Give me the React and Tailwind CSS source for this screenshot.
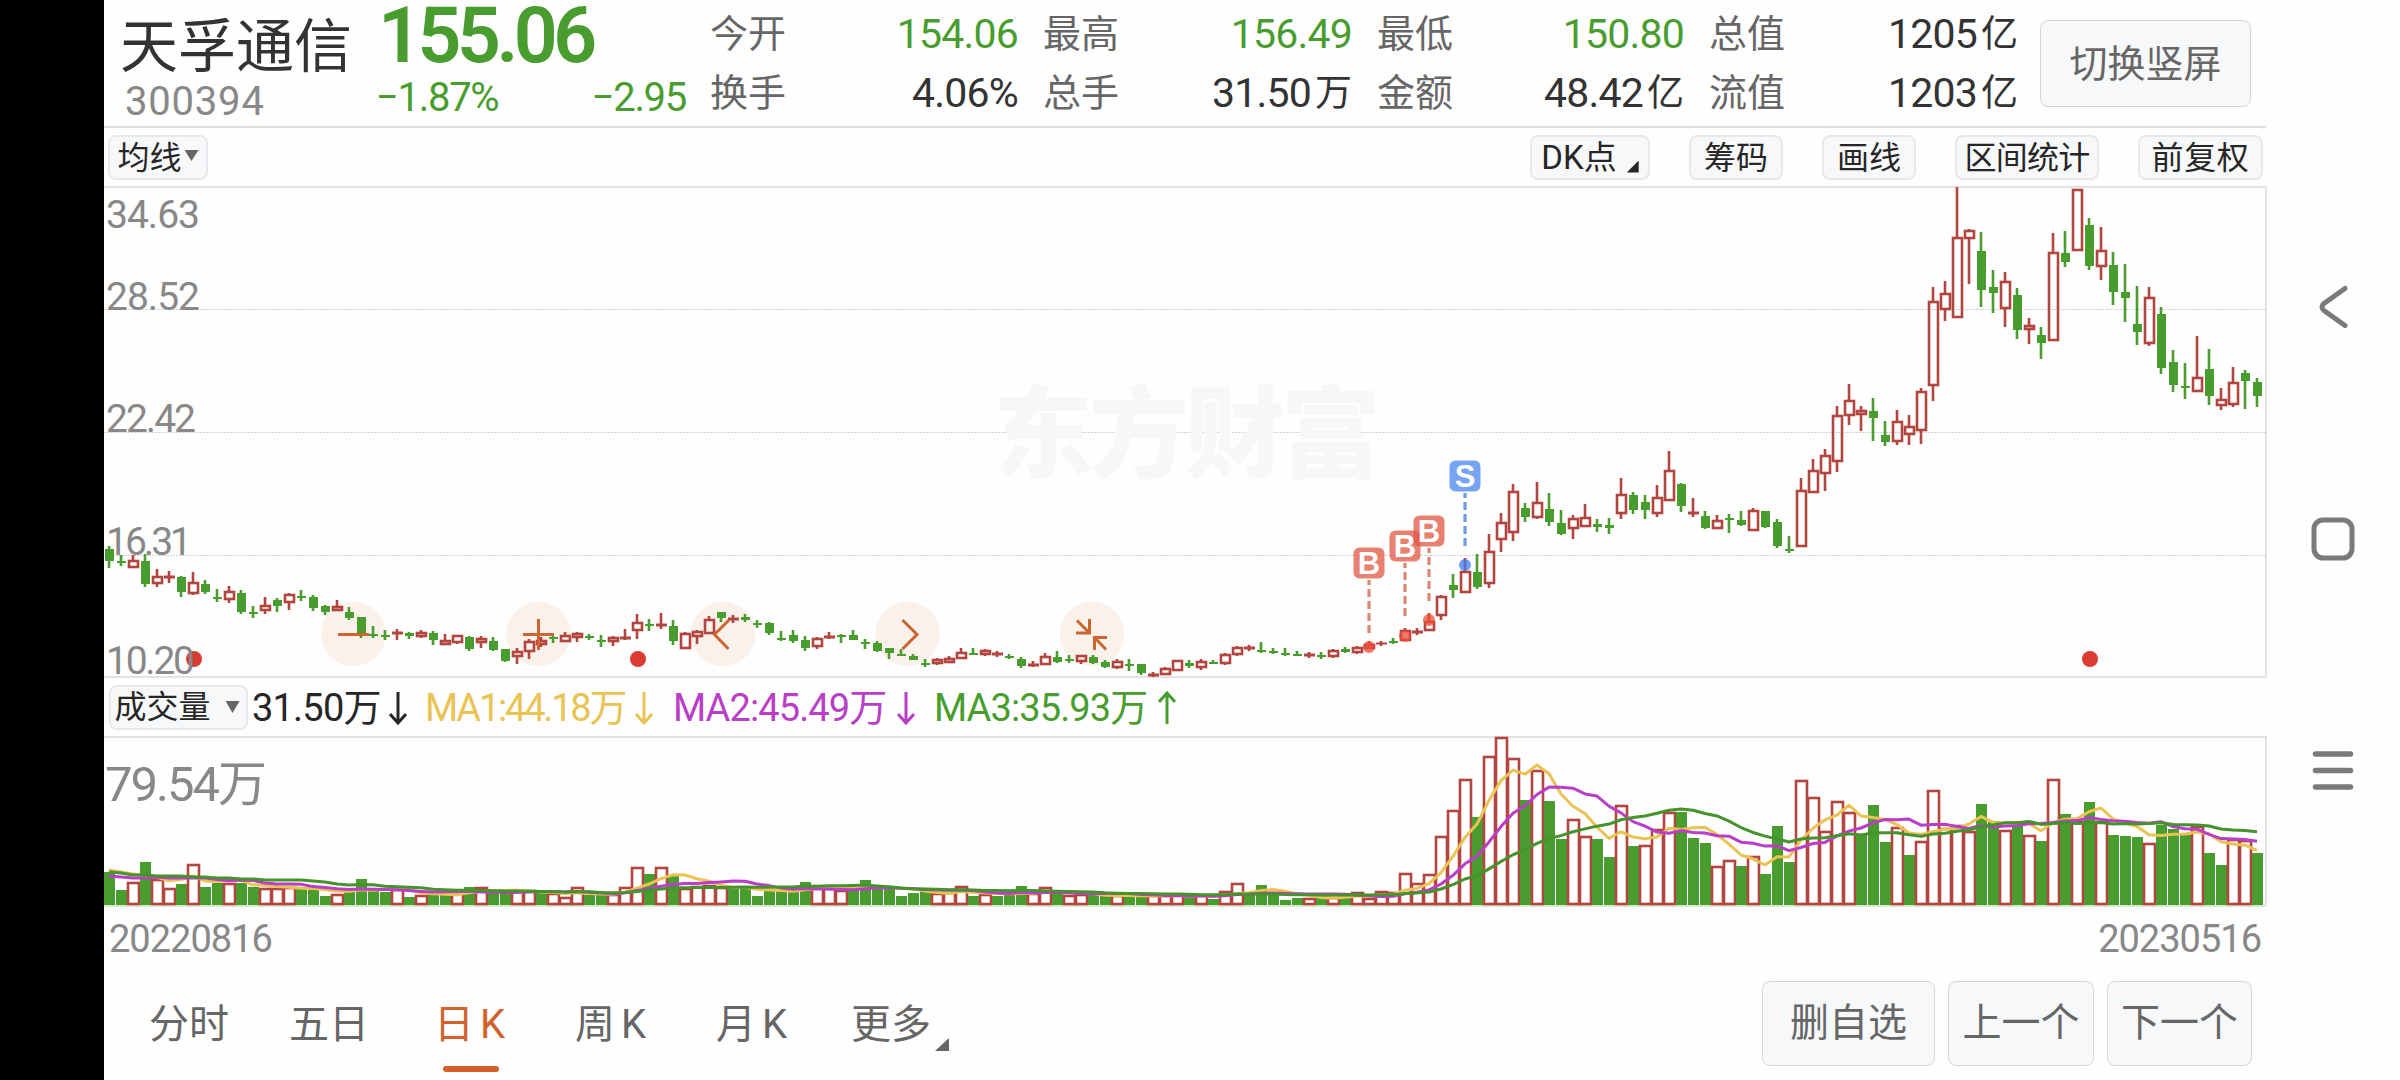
import clsx from "clsx";

const UP = "#b2453f";
const DOWN = "#489d2e";

// [direction, high, body top, body bottom, low] in chart pixels
const candles = [
  ["g", 546, 549, 561, 568], ["g", 555, 561, 562, 566], ["r", 555, 561, 567, 568], ["g", 554, 561, 584, 587],
  ["r", 569, 577, 583, 587], ["r", 571, 576, 578, 583], ["g", 576, 577, 592, 597], ["r", 572, 583, 593, 595],
  ["g", 580, 584, 592, 594], ["g", 589, 597, 598, 602], ["r", 586, 592, 599, 603], ["g", 590, 593, 612, 614],
  ["g", 606, 612, 613, 618], ["r", 597, 606, 610, 614], ["g", 598, 600, 606, 612], ["r", 593, 595, 602, 610],
  ["g", 590, 596, 598, 601], ["g", 595, 597, 608, 611], ["g", 605, 606, 612, 615], ["r", 600, 607, 610, 611],
  ["g", 607, 612, 618, 620], ["g", 617, 617, 634, 638], ["g", 626, 634, 635, 638], ["g", 630, 635, 637, 640],
  ["r", 629, 632, 634, 640], ["g", 632, 633, 636, 639], ["r", 630, 633, 636, 638], ["g", 631, 633, 640, 645],
  ["r", 634, 641, 644, 645], ["r", 635, 636, 642, 644], ["g", 636, 637, 649, 651], ["r", 636, 639, 642, 648],
  ["g", 637, 641, 650, 651], ["g", 649, 649, 661, 662], ["r", 648, 652, 656, 664], ["r", 639, 642, 651, 659],
  ["r", 637, 641, 644, 647], ["g", 636, 637, 638, 643], ["r", 632, 636, 641, 641], ["r", 632, 634, 637, 642],
  ["g", 634, 636, 637, 640], ["g", 635, 640, 641, 647], ["r", 636, 638, 641, 646], ["r", 629, 637, 639, 640],
  ["r", 614, 623, 630, 639], ["g", 619, 624, 625, 631], ["r", 613, 624, 626, 629], ["g", 620, 626, 641, 645],
  ["r", 632, 634, 648, 649], ["r", 630, 632, 636, 644], ["r", 616, 620, 633, 634], ["g", 612, 612, 618, 622],
  ["r", 615, 618, 620, 623], ["g", 614, 617, 620, 622], ["g", 620, 623, 624, 628], ["g", 622, 623, 633, 635],
  ["g", 631, 638, 639, 641], ["g", 630, 635, 641, 643], ["g", 636, 640, 648, 651], ["r", 637, 639, 646, 649],
  ["r", 632, 636, 638, 639], ["g", 634, 635, 636, 643], ["g", 630, 635, 640, 640], ["g", 639, 642, 644, 649],
  ["g", 641, 643, 651, 652], ["g", 648, 648, 653, 659], ["g", 649, 654, 655, 656], ["g", 654, 656, 660, 660],
  ["g", 659, 663, 664, 667], ["r", 658, 660, 663, 665], ["r", 656, 659, 662, 663], ["r", 648, 653, 658, 659],
  ["g", 648, 653, 654, 655], ["r", 649, 651, 654, 656], ["r", 651, 653, 655, 657], ["g", 654, 656, 657, 659],
  ["g", 657, 659, 666, 668], ["r", 661, 664, 666, 667], ["r", 653, 657, 664, 665], ["g", 651, 657, 662, 663],
  ["g", 655, 659, 660, 663], ["r", 655, 656, 661, 664], ["g", 655, 657, 663, 664], ["g", 660, 662, 667, 668],
  ["r", 659, 662, 667, 669], ["g", 659, 664, 665, 671], ["g", 664, 664, 673, 675], ["r", 672, 674, 676, 677],
  ["r", 667, 669, 674, 675], ["r", 660, 661, 670, 671], ["g", 660, 663, 666, 668], ["r", 659, 662, 667, 670],
  ["g", 660, 662, 663, 663], ["r", 653, 655, 663, 665], ["r", 646, 648, 654, 656], ["r", 645, 647, 649, 651],
  ["g", 642, 650, 651, 653], ["g", 648, 651, 652, 654], ["g", 648, 653, 654, 656], ["g", 651, 654, 655, 656],
  ["r", 652, 654, 656, 658], ["g", 652, 655, 656, 659], ["r", 649, 651, 656, 658], ["g", 647, 649, 652, 653],
  ["r", 646, 648, 652, 654], ["r", 641, 645, 648, 649], ["r", 641, 643, 644, 646], ["g", 638, 641, 642, 644],
  ["r", 628, 631, 640, 641], ["r", 628, 631, 633, 635], ["r", 613, 622, 630, 631], ["r", 595, 597, 615, 620],
  ["g", 574, 585, 590, 598], ["r", 558, 572, 592, 593], ["g", 554, 572, 587, 589], ["r", 534, 552, 583, 588],
  ["r", 513, 523, 539, 552], ["r", 484, 492, 532, 541], ["g", 503, 508, 517, 522], ["r", 482, 503, 517, 519],
  ["g", 493, 509, 522, 526], ["g", 510, 523, 534, 535], ["r", 515, 519, 528, 539], ["r", 504, 518, 526, 527],
  ["g", 519, 524, 527, 532], ["g", 518, 525, 528, 534], ["r", 478, 495, 513, 519], ["g", 492, 495, 510, 514],
  ["g", 495, 502, 510, 519], ["r", 485, 498, 513, 517], ["r", 451, 471, 500, 501], ["g", 483, 484, 506, 512],
  ["r", 498, 512, 514, 517], ["g", 511, 516, 528, 529], ["r", 515, 521, 528, 529], ["g", 514, 518, 520, 533],
  ["g", 511, 520, 525, 526], ["r", 508, 511, 530, 531], ["g", 511, 511, 527, 528], ["g", 519, 522, 546, 548],
  ["g", 536, 549, 551, 553], ["r", 478, 491, 546, 547], ["r", 459, 471, 492, 493], ["r", 449, 456, 473, 491],
  ["r", 406, 416, 461, 472], ["r", 384, 401, 415, 425], ["r", 406, 411, 414, 431], ["g", 398, 411, 418, 441],
  ["g", 421, 435, 442, 446], ["r", 410, 422, 441, 445], ["r", 415, 427, 434, 445], ["r", 388, 392, 430, 444],
  ["r", 287, 302, 385, 401], ["r", 281, 294, 309, 321], ["r", 187, 238, 317, 318], ["r", 229, 231, 238, 284],
  ["g", 232, 251, 290, 307], ["g", 270, 287, 293, 313], ["r", 272, 282, 308, 327], ["g", 288, 295, 330, 339],
  ["r", 318, 326, 329, 344], ["g", 327, 335, 343, 359], ["r", 233, 253, 340, 341], ["g", 231, 253, 262, 267],
  ["r", 189, 190, 250, 251], ["g", 218, 225, 266, 270], ["r", 227, 251, 266, 280], ["g", 252, 265, 292, 305],
  ["g", 264, 292, 298, 322], ["g", 286, 324, 332, 345], ["r", 287, 298, 343, 346], ["g", 307, 314, 368, 374],
  ["g", 350, 362, 385, 392], ["g", 363, 386, 387, 399], ["r", 336, 378, 391, 392], ["g", 349, 369, 396, 405],
  ["r", 388, 400, 405, 410], ["r", 367, 383, 404, 407], ["g", 370, 373, 381, 409], ["g", 378, 382, 396, 407],
];

// top of each volume bar
const volumes = [
  872, 890, 883, 862, 880, 889, 884, 865, 887, 883, 884, 883, 887, 889, 889, 888, 888, 888, 896, 895,
  891, 879, 890, 892, 890, 897, 896, 894, 894, 893, 887, 888, 891, 893, 892, 891, 893, 894, 898, 888,
  895, 895, 895, 888, 868, 874, 868, 876, 889, 887, 886, 888, 887, 889, 896, 890, 891, 890, 882, 889,
  889, 891, 890, 880, 887, 888, 896, 893, 891, 894, 893, 887, 896, 895, 896, 895, 886, 894, 888, 894,
  896, 895, 895, 896, 896, 896, 896, 896, 896, 895, 896, 896, 899, 892, 884, 893, 885, 894, 900, 898,
  899, 896, 898, 895, 893, 899, 892, 893, 874, 884, 875, 837, 811, 780, 817, 757, 738, 759, 800, 771,
  801, 839, 820, 837, 839, 857, 806, 846, 846, 830, 813, 812, 838, 843, 867, 861, 866, 857, 874, 826,
  862, 781, 798, 832, 802, 813, 835, 805, 842, 828, 855, 842, 791, 829, 826, 832, 804, 821, 831, 825,
  836, 841, 780, 814, 822, 802, 822, 835, 836, 837, 844, 825, 829, 835, 827, 853, 865, 840, 841, 853,
];

// one letter per bar, r is a rising day and g a falling one
const volumeSides = [
  "ggrgrrgrggrggrrrgggr",
  "ggggrgrggrgrggrrgrrr",
  "ggrrrgrgrrrrgggggggr",
  "rrgggggggrrrgrgggrrg",
  "rrggrggrrrgrgrrggggg",
  "rgrgrrrrrrrrrrgrrrgr",
  "ggrrggrgrrrgggrrgrgg",
  "grrrrrgggrgrrrrrggrg",
  "rgrgrgrgggrgggrggrrg",
].join("");

const xAt = (i) => 109 + 12 * i;

function average(period, head) {
  return volumes.map((_, i) => {
    if (i < head.length) return head[i];
    const part = volumes.slice(i - period + 1, i + 1);
    return part.reduce((a, b) => a + b, 0) / part.length;
  });
}

const averages = [
  { color: "#e9c353", values: average(5, [870, 872, 874, 876]) },
  { color: "#b83fc6", values: average(10, [876, 877, 878, 878, 877, 878, 878, 878, 878]) },
  {
    color: "#46922d",
    values: average(20, [872, 873, 875, 875, 876, 876, 876, 877, 877, 878, 878, 879, 879, 880, 880, 880, 880, 881, 882]),
  },
];

const stats = [
  { label: "今开", value: "154.06", down: true },
  { label: "最高", value: "156.49", down: true },
  { label: "最低", value: "150.80", down: true },
  { label: "总值", value: "1205", unit: "亿" },
  { label: "换手", value: "4.06%" },
  { label: "总手", value: "31.50", unit: "万" },
  { label: "金额", value: "48.42", unit: "亿" },
  { label: "流值", value: "1203", unit: "亿" },
];

const trades = [
  { type: "B", x: 1369, y: 563, dot: 647 },
  { type: "B", x: 1405, y: 546, dot: 636 },
  { type: "B", x: 1429, y: 531, dot: 620 },
  { type: "S", x: 1465, y: 476, dot: 565 },
];

function Candle({ x, data }) {
  const [side, high, top, bottom, low] = data;
  const color = side === "g" ? DOWN : UP;
  const thin = side === "r" && bottom - top <= 2;
  return (
    <g>
      <path d={`M${x} ${high}V${top}M${x} ${bottom}V${low}`} stroke={color} strokeWidth="2.6" />
      {side === "g" && <rect x={x - 4} y={top} width="9" height={Math.max(bottom - top, 2)} fill={color} />}
      {thin && <rect x={x - 5} y={top - 0.5} width="11" height={bottom - top + 1} fill={color} />}
      {side === "r" && !thin && (
        <rect x={x - 4} y={top} width="9" height={bottom - top} fill="none" stroke={color} strokeWidth="2.6" />
      )}
    </g>
  );
}

function Trade({ type, x, y, dot }) {
  const buy = type === "B";
  return (
    <g>
      <circle cx={x} cy={dot} r="6" fill={buy ? "#ee4b35" : "#3f7cf0"} opacity="0.75" />
      <path
        d={`M${x} ${y + 70}V${y + 17}`}
        stroke={buy ? "#d98673" : "#6c9be6"}
        strokeWidth="3.2"
        strokeDasharray="8 4"
      />
      <rect x={x - 15.5} y={y - 15.5} width="31" height="31" rx="6" fill={buy ? "#e05a44" : "#4c87ee"} opacity="0.76" />
      <text
        x={x}
        y={y + 11}
        textAnchor="middle"
        fill="#fff"
        className="font-['Liberation_Sans',sans-serif] text-[31px] font-bold"
      >
        {type}
      </text>
    </g>
  );
}

function PriceChart() {
  const labels = [
    ["34.63", 228, 94],
    ["28.52", 310, 94],
    ["22.42", 432, 90],
    ["16.31", 555, 86],
    ["10.20", 674, 89],
  ];
  return (
    <svg className="block shrink-0" width="2164" height="492" viewBox="104 186 2164 492">
      <path d="M104 187H2266V677H104" fill="none" stroke="#e3e3e3" strokeWidth="2" />
      {[309.5, 432.5, 555.5].map((y) => (
        <path key={y} d={`M104 ${y}H2266`} stroke="#d2d2d2" strokeWidth="1" strokeDasharray="2 1" />
      ))}
      <text
        x="993"
        y="470"
        textLength="388"
        fill="#f7f7f7"
        className="font-['Noto_Sans_CJK_SC',sans-serif] text-[100px] font-black"
      >
        东方财富
      </text>
      {[353.5, 538.5, 723, 907.5, 1092].map((x) => (
        <circle key={x} cx={x} cy="634" r="32.3" fill="#fbf1eb" />
      ))}
      {[194, 638, 2090].map((x) => (
        <circle key={x} cx={x} cy="659" r="8" fill="#dc3b32" />
      ))}
      {labels.map(([text, y, width]) => (
        <text key={text} x="106" y={y} textLength={width} fill="#888" className="text-[39px]">
          {text}
        </text>
      ))}
      {candles.map((c, i) => (
        <Candle key={i} x={xAt(i)} data={c} />
      ))}
      <g fill="none" stroke="#cc6532" strokeWidth="3">
        <path d="M338 634.5H369" />
        <path d="M523 634.5H554M538.5 619V650" />
        <path d="M729 620L714.5 634.5L728.5 649" />
        <path d="M902.5 620L917 634.5L902.5 649" />
        <path d="M1077 620.5L1089 632.5M1089.5 619V633H1076M1107 637.5H1094.5V650M1094.5 637.5L1106 649.5" />
      </g>
      {trades.map((t) => (
        <Trade key={t.x} {...t} />
      ))}
    </svg>
  );
}

function VolumeChart() {
  return (
    <svg className="block shrink-0" width="2164" height="171" viewBox="104 736 2164 171">
      <path d="M104 737H2266V906" fill="none" stroke="#e3e3e3" strokeWidth="2" />
      <path d="M104 906H2266" stroke="#d5ebcb" strokeWidth="2" />
      <text x="105" y="801" textLength="162" fill="#888" className="text-[49px]">
        79.54万
      </text>
      {volumes.map((top, i) =>
        volumeSides[i] === "g" ? (
          <rect key={i} x={xAt(i) - 5} y={top} width="11" height={905 - top} fill={DOWN} />
        ) : (
          <rect key={i} x={xAt(i) - 5} y={top} width="11" height={904 - top} fill="#fff" stroke={UP} strokeWidth="2.6" />
        )
      )}
      {averages.map(({ color, values }) => (
        <polyline
          key={color}
          points={values.map((v, i) => `${xAt(i)},${v}`).join(" ")}
          fill="none"
          stroke={color}
          strokeWidth="3"
          strokeLinejoin="round"
        />
      ))}
    </svg>
  );
}

function Arrow({ up }) {
  return (
    <svg className="shrink-0" width="18" height="34" viewBox="0 0 18 34" fill="none" stroke="currentColor" strokeWidth="3">
      <path d={up ? "M9 33V2M1 11L9 2L17 11" : "M9 1V32M1 23L9 32L17 23"} />
    </svg>
  );
}

function Chip({ className, children }) {
  return (
    <button
      className={clsx(
        "flex h-[45px] shrink-0 items-center justify-center rounded-lg border-2 border-[#e6e8eb] bg-[#f7f8fa] text-[32px] leading-none whitespace-nowrap text-[#262626]",
        className
      )}
    >
      {children}
    </button>
  );
}

function BigButton({ className, children }) {
  return (
    <button
      className={clsx(
        "flex shrink-0 items-center justify-center rounded-lg border border-[#d4d6da] bg-[#f7f8fa] leading-none whitespace-nowrap text-[#666]",
        className
      )}
    >
      {children}
    </button>
  );
}

function Header() {
  return (
    <header className="flex h-32 border-b-2 border-[#dedede]">
      <div className="w-[274px] shrink-0 pt-[18px] pl-[16px]">
        <h1 className="text-[58px] leading-[58px] whitespace-nowrap text-[#333]">天孚通信</h1>
        <div className="mt-[6px] pl-[5px] text-[40px] leading-[40px] tracking-[0.8px] text-[#888]">300394</div>
      </div>
      <div className="w-[308px] shrink-0 text-[#489d2e]">
        <div className="h-[78px] text-[77px] leading-[73px] font-semibold tracking-[-4.5px]">155.06</div>
        <div className="flex h-10 justify-between text-[40px] leading-[40px] tracking-[-1.3px]">
          <span className="-ml-0.5">−1.87%</span>
          <span>−2.95</span>
        </div>
      </div>
      <div className="ml-[24px] grid h-[118px] shrink-0 grid-cols-[308px_309px_307px_309px] grid-rows-[58px_60px] gap-x-[25px] pt-[5px]">
        {stats.map(({ label, value, unit, down }) => (
          <div key={label} className="flex items-center justify-between leading-none whitespace-nowrap">
            <span className="text-[38px] text-[#666]">{label}</span>
            <span className={clsx("flex items-center text-[41px] tracking-[-0.8px]", down ? "text-[#489d2e]" : "text-[#333]")}>
              {value}
              {unit && <span className="ml-1 text-[37px] tracking-normal">{unit}</span>}
            </span>
          </div>
        ))}
      </div>
      <BigButton className="mt-5 ml-[22px] h-[87px] w-[211px] text-[38px]">切换竖屏</BigButton>
    </header>
  );
}

function Toolbar() {
  return (
    <div className="flex h-[58px] items-start pt-[7px] pr-[3px] pl-1">
      <Chip className="w-[100px] gap-[3px]">
        均线
        <span className="mb-1 h-[11px] w-[14px] bg-[#666] [clip-path:polygon(0_0,100%_0,50%_100%)]" />
      </Chip>
      <Chip className="ml-auto w-[120px] gap-[10px]">
        <span className="text-[33px]">DK点</span>
        <span className="mt-[18px] h-[12px] w-[12px] bg-[#262626] [clip-path:polygon(100%_0,100%_100%,0_100%)]" />
      </Chip>
      <Chip className="ml-[39px] w-[94px]">筹码</Chip>
      <Chip className="ml-[39px] w-[94px]">画线</Chip>
      <Chip className="ml-[39px] w-[144px] tracking-[-0.7px]">区间统计</Chip>
      <Chip className="ml-[39px] w-[125px] tracking-[0.7px]">前复权</Chip>
    </div>
  );
}

function IndicatorBar() {
  return (
    <div className="flex h-[58px] items-center pl-[5px] text-[38px] leading-none whitespace-nowrap">
      <Chip className="w-[139px] gap-[15px] pr-[3px]">
        成交量
        <span className="h-[12px] w-[14px] bg-[#666] [clip-path:polygon(0_0,100%_0,50%_100%)]" />
      </Chip>
      <div className="ml-[4px] flex w-[173px] items-center pt-[2px] text-[#262626]">
        <span className="w-[137px] tracking-[-0.8px]">31.50万</span>
        <Arrow />
      </div>
      <div className="flex w-[248px] items-center pt-[2px] text-[#e9c353]">
        <span className="w-[210px] tracking-[-2.2px]">MA1:44.18万</span>
        <Arrow />
      </div>
      <div className="flex w-[261px] items-center pt-[2px] text-[#b83fc6]">
        <span className="w-[224px] tracking-[-0.9px]">MA2:45.49万</span>
        <Arrow />
      </div>
      <div className="flex items-center pt-[2px] text-[#489d2e]">
        <span className="w-[224px] tracking-[-0.9px]">MA3:35.93万</span>
        <Arrow up />
      </div>
    </div>
  );
}

function Tabs() {
  return (
    <div className="flex h-[115px] text-[40px] leading-none whitespace-nowrap text-[#666]">
      <div className="flex pt-[40px] pl-[45px]">
        <span>分时</span>
        <span className="ml-[60px]">五日</span>
        <div className="ml-[65px] flex w-[72px] flex-col">
          <span className="text-[#d2622c]">
            日<span className="ml-[6px]">K</span>
          </span>
          <span className="mt-[21px] ml-[9px] h-[6px] w-[56px] rounded-full bg-[#d4602c]" />
        </div>
        <span className="ml-[69px] w-[72px]">
          周<span className="ml-[6px]">K</span>
        </span>
        <span className="ml-[69px] w-[72px]">
          月<span className="ml-[6px]">K</span>
        </span>
        <span className="ml-[63px]">更多</span>
        <span className="mt-[33px] ml-[4px] h-[13px] w-[14px] bg-[#666] [clip-path:polygon(100%_0,100%_100%,0_100%)]" />
      </div>
      <div className="mr-[14px] ml-auto flex gap-[13px] pt-4 text-[39px]">
        <BigButton className="h-[85px] w-[173px]">删自选</BigButton>
        <BigButton className="h-[85px] w-[146px]">上一个</BigButton>
        <BigButton className="h-[85px] w-[145px]">下一个</BigButton>
      </div>
    </div>
  );
}

function SystemNav() {
  return (
    <nav className="flex w-[134px] shrink-0 flex-col items-center gap-[188px] pt-[285px]">
      <svg width="44" height="44" viewBox="0 0 44 44" fill="none" stroke="#7a7a7a" strokeWidth="5" strokeLinecap="round">
        <path d="M34 3.5L13 18.5Q9 22 13 25.5L34 40.5" />
      </svg>
      <svg width="44" height="44" viewBox="0 0 44 44" fill="none" stroke="#7a7a7a" strokeWidth="5">
        <rect x="3" y="3" width="38" height="38" rx="9" />
      </svg>
      <svg width="44" height="44" viewBox="0 0 44 44" fill="none" stroke="#7a7a7a" strokeWidth="5.5" strokeLinecap="round">
        <path d="M4.5 5H39.5M4.5 21.5H39.5M4.5 38H39.5" />
      </svg>
    </nav>
  );
}

function App() {
  return (
    <div className="flex h-[1080px] w-[2400px] overflow-hidden bg-[#fefefe] font-['Roboto','Noto_Sans_CJK_SC',sans-serif]">
      <div className="w-[104px] shrink-0 bg-black" />
      <main className="w-[2162px] shrink-0">
        <Header />
        <Toolbar />
        <PriceChart />
        <IndicatorBar />
        <VolumeChart />
        <div className="flex h-[58px] justify-between px-[5px] pt-[12px] text-[38px] leading-[40px] tracking-[-1px] text-[#888]">
          <span>20220816</span>
          <span>20230516</span>
        </div>
        <Tabs />
      </main>
      <SystemNav />
    </div>
  );
}

export default App;
